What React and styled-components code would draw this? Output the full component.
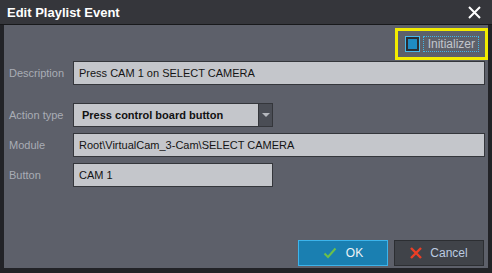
import React from "react";
import styled, { createGlobalStyle } from "styled-components";

const GlobalStyle = createGlobalStyle`
  html, body {
    margin: 0;
    padding: 0;
    background: #222327;
  }
`;

const Window = styled.div`
  width: 492px;
  height: 273px;
  display: flex;
  flex-direction: column;
  background: #222327;
  box-sizing: border-box;
  overflow: hidden;
`;

const TitleBar = styled.div`
  height: 24px;
  flex: 0 0 24px;
  display: flex;
  align-items: center;
  justify-content: space-between;
  padding: 0 11px 0 7px;
  background: #35363b;
  border-bottom: 1px solid #18191b;
`;

const Title = styled.span`
  font-family: "Liberation Sans", Arial, sans-serif;
  font-weight: bold;
  font-size: 13px;
  color: #ffffff;
`;

const CloseButton = styled.svg`
  width: 13px;
  height: 13px;
  display: block;
`;

const Body = styled.div`
  flex: 1;
  display: flex;
  flex-direction: column;
  margin: 0 4px 5px 4px;
  padding-top: 3px;
  padding-bottom: 2px;
  background: #5d606a;
  font-family: "Liberation Sans", Arial, sans-serif;
  font-size: 11px;
`;

const TopRow = styled.div`
  display: flex;
  justify-content: flex-end;
`;

const Highlight = styled.div`
  display: flex;
  align-items: center;
  gap: 3px;
  height: 32px;
  box-sizing: border-box;
  padding: 0 6px 0 7px;
  border: 3px solid #f3ec00;
`;

const CheckBox = styled.div`
  width: 15px;
  height: 16px;
  box-sizing: border-box;
  border: 1px solid #45b9ec;
  background: #2a2d33;
  padding: 2px;

  &::after {
    content: "";
    display: block;
    width: 100%;
    height: 100%;
    background: #1f8bc3;
  }
`;

const CheckLabel = styled.span`
  height: 16px;
  box-sizing: border-box;
  display: flex;
  align-items: center;
  padding: 0 3px 0 4px;
  border: 1px dotted #3fb6e8;
  color: #c3c6cc;
  font-size: 12px;
`;

const Row = styled.div`
  display: flex;
  align-items: center;
  margin-top: ${(p) => p.$gap || 6}px;
  padding: 0 3px 0 5px;
`;

const Label = styled.span`
  width: 64px;
  flex: 0 0 64px;
  color: #a9adb5;
  white-space: nowrap;
`;

const Field = styled.div`
  height: 24px;
  box-sizing: border-box;
  display: flex;
  align-items: center;
  flex: ${(p) => (p.$width ? `0 0 ${p.$width}px` : "1")};
  padding-left: 5px;
  background: #c4c6cb;
  border: 1px solid #34363b;
  color: #141414;
  white-space: nowrap;
`;

const Select = styled.div`
  height: 24px;
  width: 200px;
  box-sizing: border-box;
  display: flex;
  border: 1px solid #34363b;
`;

const SelectValue = styled.div`
  flex: 1;
  display: flex;
  align-items: center;
  padding-left: 8px;
  background: #c4c6cb;
  color: #111;
  font-weight: bold;
  white-space: nowrap;
`;

const SelectArrow = styled.div`
  width: 13px;
  display: flex;
  align-items: center;
  justify-content: center;
  background: #4a4d55;
  border-left: 1px solid #34363b;

  &::after {
    content: "";
    border-left: 4px solid transparent;
    border-right: 4px solid transparent;
    border-top: 4px solid #b4b7bd;
  }
`;

const ButtonRow = styled.div`
  display: flex;
  justify-content: flex-end;
  gap: 6px;
  margin-top: auto;
  padding-right: 4px;
`;

const Button = styled.div`
  width: 90px;
  height: 26px;
  box-sizing: border-box;
  display: flex;
  align-items: center;
  justify-content: center;
  gap: ${(p) => (p.$primary ? 9 : 8)}px;
  background: ${(p) => (p.$primary ? "#1a7fb1" : "#404349")};
  border: 1px solid ${(p) => (p.$primary ? "#3cb4ec" : "#2c2e32")};
  color: ${(p) => (p.$primary ? "#eef3f6" : "#bccbe0")};
  font-size: 12px;
`;

const Icon = styled.svg`
  width: ${(p) => p.$size}px;
  height: ${(p) => p.$size}px;
  display: block;
`;

export default function App() {
  return (
    <>
      <GlobalStyle />
      <Window>
        <TitleBar>
          <Title>Edit Playlist Event</Title>
          <CloseButton viewBox="0 0 13 13">
            <path d="M1 1 L12 12 M12 1 L1 12" stroke="#ffffff" strokeWidth="2" />
          </CloseButton>
        </TitleBar>
        <Body>
          <TopRow>
            <Highlight>
              <CheckBox />
              <CheckLabel>Initializer</CheckLabel>
            </Highlight>
          </TopRow>
          <Row $gap={1}>
            <Label>Description</Label>
            <Field>Press CAM 1 on SELECT CAMERA</Field>
          </Row>
          <Row $gap={18}>
            <Label>Action type</Label>
            <Select>
              <SelectValue>Press control board button</SelectValue>
              <SelectArrow />
            </Select>
          </Row>
          <Row>
            <Label>Module</Label>
            <Field>Root\VirtualCam_3-Cam\SELECT CAMERA</Field>
          </Row>
          <Row>
            <Label>Button</Label>
            <Field $width={200}>CAM 1</Field>
          </Row>
          <ButtonRow>
            <Button $primary>
              <Icon $size={14} viewBox="0 0 14 14">
                <path d="M1.5 7.5 L5 11 L12.5 2.5" fill="none" stroke="#6cc04a" strokeWidth="2" />
              </Icon>
              OK
            </Button>
            <Button>
              <Icon $size={12} viewBox="0 0 12 12">
                <path d="M1 1 L11 11 M11 1 L1 11" stroke="#ea3f26" strokeWidth="2.4" />
              </Icon>
              Cancel
            </Button>
          </ButtonRow>
        </Body>
      </Window>
    </>
  );
}
